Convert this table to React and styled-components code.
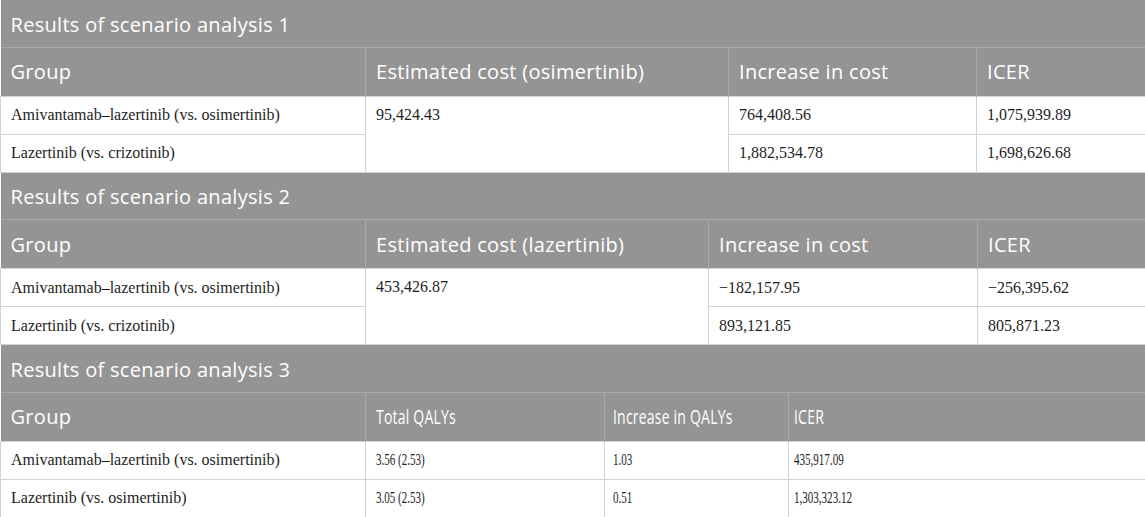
import React from "react";
import styled, { createGlobalStyle } from "styled-components";

const Global = createGlobalStyle`
  html, body { margin: 0; padding: 0; background: #ffffff; }
  #root { width: 1145px; }
`;

const Wrap = styled.div`
  width: 1145px;
  display: flex;
  flex-direction: column;
`;

const Table = styled.table`
  width: 1145px;
  border-collapse: collapse;
  table-layout: fixed;
`;

const TitleCell = styled.th`
  background: #949494;
  color: #ffffff;
  font-family: "Open Sans", "Liberation Sans", sans-serif;
  font-weight: 400;
  font-size: 20px;
  letter-spacing: 0.3px;
  text-align: left;
  height: 47px;
  padding: 2px 10px 0;
  border-bottom: 1px solid #a9a9a9;
  box-sizing: border-box;
`;

const HeadCell = styled.th`
  background: #949494;
  color: #ffffff;
  font-family: "Open Sans", "Liberation Sans", sans-serif;
  font-weight: 400;
  font-size: 20px;
  letter-spacing: 0.3px;
  text-align: left;
  height: 48px;
  padding: 0 10px 0 ${(p) => p.$pl ?? 10}px;
  border-left: 1px solid #a9a9a9;
  white-space: nowrap;
  overflow: hidden;
  &:first-child { border-left: none; }
`;

const Cell = styled.td`
  font-family: "Liberation Serif", "Times New Roman", serif;
  font-size: 16px;
  color: #1e1e1e;
  height: 37px;
  padding: 0 10px 0 ${(p) => p.$pl ?? 10}px;
  border: 1px solid #d2d2d2;
  vertical-align: ${(p) => (p.$top ? "top" : "middle")};
  padding-top: ${(p) => (p.$top ? "9px" : "0")};
  white-space: nowrap;
`;

const Squeeze = styled.span`
  display: inline-block;
  transform: scaleX(${(p) => p.$s});
  transform-origin: left center;
`;

const sections = [
  {
    title: "Results of scenario analysis 1",
    widths: [365, 363, 248, 169],
    head: ["Group", "Estimated cost (osimertinib)", "Increase in cost", "ICER"],
    merged: true,
    rows: [
      ["Amivantamab–lazertinib (vs. osimertinib)", "95,424.43", "764,408.56", "1,075,939.89"],
      ["Lazertinib (vs. crizotinib)", null, "1,882,534.78", "1,698,626.68"],
    ],
  },
  {
    title: "Results of scenario analysis 2",
    widths: [365, 343, 269, 168],
    head: ["Group", "Estimated cost (lazertinib)", "Increase in cost", "ICER"],
    merged: true,
    rows: [
      ["Amivantamab–lazertinib (vs. osimertinib)", "453,426.87", "\u2212182,157.95", "\u2212256,395.62"],
      ["Lazertinib (vs. crizotinib)", null, "893,121.85", "805,871.23"],
    ],
  },
  {
    title: "Results of scenario analysis 3",
    widths: [365, 239, 184, 357],
    head: ["Group", "Total QALYs", "Increase in QALYs", "ICER"],
    merged: false,
    narrow: { head: 0.7, body: 0.69 },
    pads: [10, 10, 8, 5],
    rows: [
      ["Amivantamab–lazertinib (vs. osimertinib)", "3.56 (2.53)", "1.03", "435,917.09"],
      ["Lazertinib (vs. osimertinib)", "3.05 (2.53)", "0.51", "1,303,323.12"],
    ],
  },
];

function Text({ narrow, col, children }) {
  if (!narrow || col === 0) return children;
  return <Squeeze $s={narrow}>{children}</Squeeze>;
}

function Section({ s }) {
  const pad = (i) => (s.pads ? s.pads[i] : 10);
  return (
    <Table>
      <colgroup>
        {s.widths.map((w, i) => (
          <col key={i} style={{ width: w }} />
        ))}
      </colgroup>
      <thead>
        <tr>
          <TitleCell colSpan={4}>{s.title}</TitleCell>
        </tr>
        <tr>
          {s.head.map((h, i) => (
            <HeadCell key={i} $pl={pad(i)}>
              <Text narrow={s.narrow && s.narrow.head} col={i}>
                {h}
              </Text>
            </HeadCell>
          ))}
        </tr>
      </thead>
      <tbody>
        {s.rows.map((r, ri) => (
          <tr key={ri}>
            {r.map((c, ci) => {
              if (c === null) return null;
              const content = (
                <Text narrow={s.narrow && s.narrow.body} col={ci}>
                  {c}
                </Text>
              );
              if (s.merged && ci === 1 && ri === 0) {
                return (
                  <Cell key={ci} rowSpan={2} $top $pl={pad(ci)}>
                    {content}
                  </Cell>
                );
              }
              return (
                <Cell key={ci} $pl={pad(ci)}>
                  {content}
                </Cell>
              );
            })}
          </tr>
        ))}
      </tbody>
    </Table>
  );
}

export default function App() {
  return (
    <>
      <Global />
      <Wrap>
        {sections.map((s, i) => (
          <Section key={i} s={s} />
        ))}
      </Wrap>
    </>
  );
}
